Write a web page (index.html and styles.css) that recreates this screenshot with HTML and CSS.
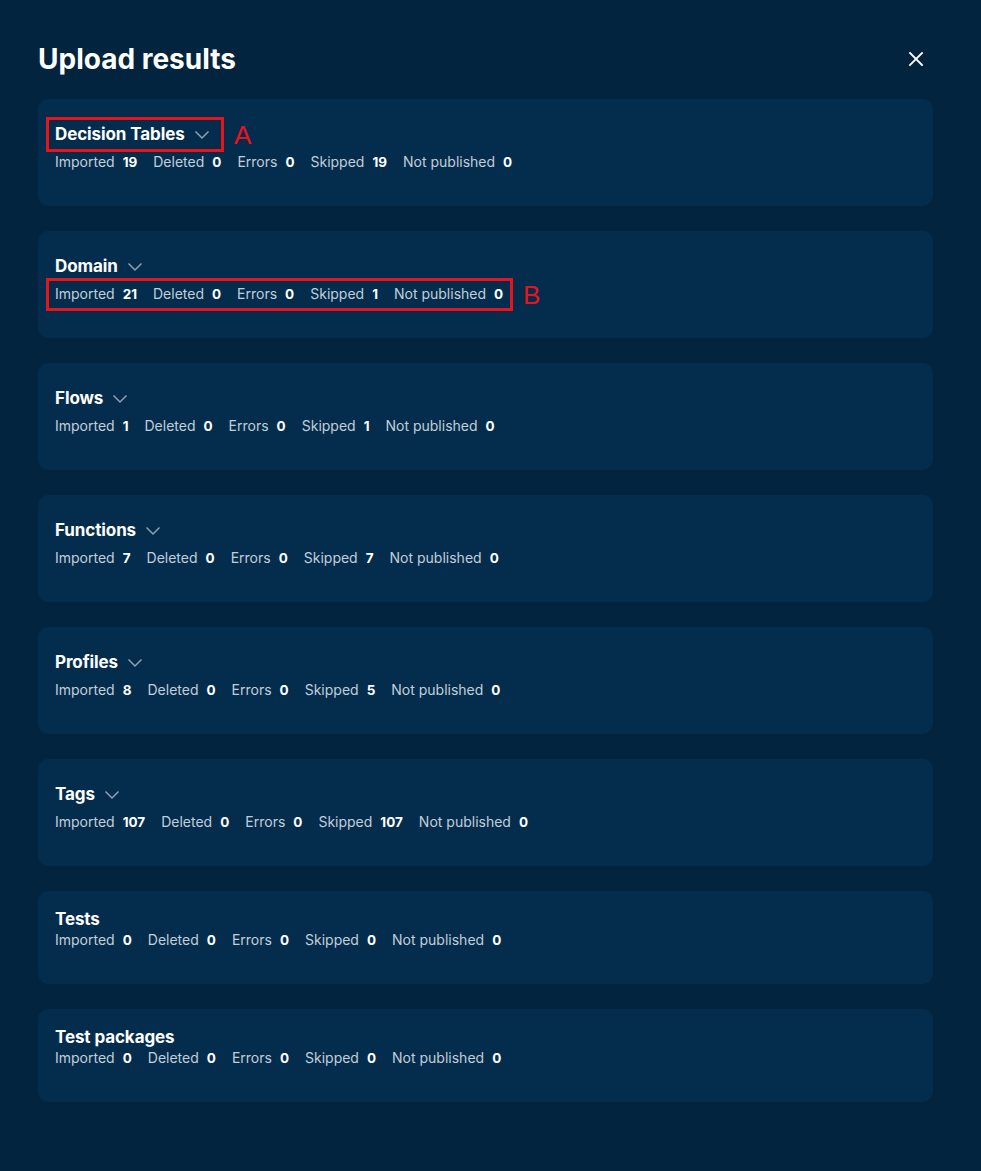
FILE: index.html
```html
<!DOCTYPE html>
<html>
<head>
<meta charset="utf-8">
<link rel="stylesheet" href="styles.css">
</head>
<body>
<div class="modal">
  <div class="modal-head">
    <h1 class="title">Upload results</h1>
    <button class="close" aria-label="Close">
      <svg width="16" height="16" viewBox="0 0 16 16"><path d="M2 2 L14 14 M14 2 L2 14" stroke="#ffffff" stroke-width="1.8" stroke-linecap="square" fill="none"/></svg>
    </button>
  </div>
  <div class="list">
    <section class="card">
      <div class="head has-toggle">
        <span class="mark mark-a"><span class="mark-label">A</span></span>
        <span class="name">Decision Tables</span>
        <svg class="chev" width="16" height="10" viewBox="0 0 16 10"><path d="M1.5 1.5 L8 8 L14.5 1.5" stroke="#8fa0b3" stroke-width="1.5" fill="none"/></svg>
      </div>
      <div class="stats"><span class="lbl">Imported</span><b>19</b><span class="lbl">Deleted</span><b>0</b><span class="lbl">Errors</span><b>0</b><span class="lbl">Skipped</span><b>19</b><span class="lbl">Not published</span><b>0</b></div>
    </section>
    <section class="card">
      <div class="head has-toggle">
        <span class="name">Domain</span>
        <svg class="chev" width="16" height="10" viewBox="0 0 16 10"><path d="M1.5 1.5 L8 8 L14.5 1.5" stroke="#8fa0b3" stroke-width="1.5" fill="none"/></svg>
      </div>
      <div class="stats marked"><span class="mark mark-b"><span class="mark-label">B</span></span><span class="lbl">Imported</span><b>21</b><span class="lbl">Deleted</span><b>0</b><span class="lbl">Errors</span><b>0</b><span class="lbl">Skipped</span><b>1</b><span class="lbl">Not published</span><b>0</b></div>
    </section>
    <section class="card">
      <div class="head has-toggle">
        <span class="name">Flows</span>
        <svg class="chev" width="16" height="10" viewBox="0 0 16 10"><path d="M1.5 1.5 L8 8 L14.5 1.5" stroke="#8fa0b3" stroke-width="1.5" fill="none"/></svg>
      </div>
      <div class="stats"><span class="lbl">Imported</span><b>1</b><span class="lbl">Deleted</span><b>0</b><span class="lbl">Errors</span><b>0</b><span class="lbl">Skipped</span><b>1</b><span class="lbl">Not published</span><b>0</b></div>
    </section>
    <section class="card">
      <div class="head has-toggle">
        <span class="name">Functions</span>
        <svg class="chev" width="16" height="10" viewBox="0 0 16 10"><path d="M1.5 1.5 L8 8 L14.5 1.5" stroke="#8fa0b3" stroke-width="1.5" fill="none"/></svg>
      </div>
      <div class="stats"><span class="lbl">Imported</span><b>7</b><span class="lbl">Deleted</span><b>0</b><span class="lbl">Errors</span><b>0</b><span class="lbl">Skipped</span><b>7</b><span class="lbl">Not published</span><b>0</b></div>
    </section>
    <section class="card">
      <div class="head has-toggle">
        <span class="name">Profiles</span>
        <svg class="chev" width="16" height="10" viewBox="0 0 16 10"><path d="M1.5 1.5 L8 8 L14.5 1.5" stroke="#8fa0b3" stroke-width="1.5" fill="none"/></svg>
      </div>
      <div class="stats"><span class="lbl">Imported</span><b>8</b><span class="lbl">Deleted</span><b>0</b><span class="lbl">Errors</span><b>0</b><span class="lbl">Skipped</span><b>5</b><span class="lbl">Not published</span><b>0</b></div>
    </section>
    <section class="card">
      <div class="head has-toggle">
        <span class="name">Tags</span>
        <svg class="chev" width="16" height="10" viewBox="0 0 16 10"><path d="M1.5 1.5 L8 8 L14.5 1.5" stroke="#8fa0b3" stroke-width="1.5" fill="none"/></svg>
      </div>
      <div class="stats"><span class="lbl">Imported</span><b>107</b><span class="lbl">Deleted</span><b>0</b><span class="lbl">Errors</span><b>0</b><span class="lbl">Skipped</span><b>107</b><span class="lbl">Not published</span><b>0</b></div>
    </section>
    <section class="card">
      <div class="head">
        <span class="name">Tests</span>
      </div>
      <div class="stats"><span class="lbl">Imported</span><b>0</b><span class="lbl">Deleted</span><b>0</b><span class="lbl">Errors</span><b>0</b><span class="lbl">Skipped</span><b>0</b><span class="lbl">Not published</span><b>0</b></div>
    </section>
    <section class="card">
      <div class="head">
        <span class="name">Test packages</span>
      </div>
      <div class="stats"><span class="lbl">Imported</span><b>0</b><span class="lbl">Deleted</span><b>0</b><span class="lbl">Errors</span><b>0</b><span class="lbl">Skipped</span><b>0</b><span class="lbl">Not published</span><b>0</b></div>
    </section>
  </div>
</div>
</body>
</html>
```

FILE: styles.css
```css
* { box-sizing: border-box; }
html, body {
  margin: 0;
  padding: 0;
  background: #03243e;
  height: 100%;
}
body {
  font-family: "Inter", "Noto Sans", sans-serif;
  color: #ffffff;
}
.modal {
  padding: 40px 48px 40px 38px;
}
.modal-head {
  display: flex;
  align-items: center;
  justify-content: space-between;
  height: 38px;
  margin-bottom: 21px;
}
.title {
  margin: 0;
  font-size: 28px;
  font-weight: 700;
  letter-spacing: 0;
  line-height: 38px;
}
.close {
  background: none;
  border: 0;
  padding: 0;
  width: 16px;
  height: 16px;
  margin-right: 9px;
  display: flex;
  cursor: pointer;
}
.list {
  display: flex;
  flex-direction: column;
  gap: 25px;
}
.card {
  background: #042d4d;
  border-radius: 10px;
  padding: 18px 18px 34px 17px;
}
.head {
  position: relative;
  display: flex;
  align-items: center;
  gap: 9px;
  height: 20px;
}
.head.has-toggle {
  height: 34px;
}
.name {
  font-size: 17px;
  font-weight: 700;
  line-height: 20px;
  letter-spacing: -0.1px;
}
.chev {
  display: block;
  margin-top: 1px;
}
.stats {
  position: relative;
  display: flex;
  align-items: center;
  height: 20px;
  margin-top: 1px;
  font-size: 14px;
  line-height: 20px;
}
.stats .lbl {
  color: #c3cdd8;
  margin-right: 8px;
}
.stats b {
  font-weight: 700;
  color: #ffffff;
  font-size: 13.5px;
  margin-right: 16px;
}
.mark {
  position: absolute;
  border: 3px solid #e8141c;
  pointer-events: none;
}
.mark-a {
  left: -9px;
  top: 0;
  width: 178px;
  height: 35px;
}
.mark-b {
  left: -9px;
  top: -6px;
  width: 467px;
  height: 33px;
}
.mark-label {
  position: absolute;
  top: 50%;
  transform: translateY(-50%);
  color: #e8141c;
  font-family: "Liberation Sans", sans-serif;
  font-size: 26px;
  font-weight: 400;
  line-height: 1;
}
.mark-a .mark-label { left: 185px; }
.mark-b .mark-label { left: 474px; }
```
